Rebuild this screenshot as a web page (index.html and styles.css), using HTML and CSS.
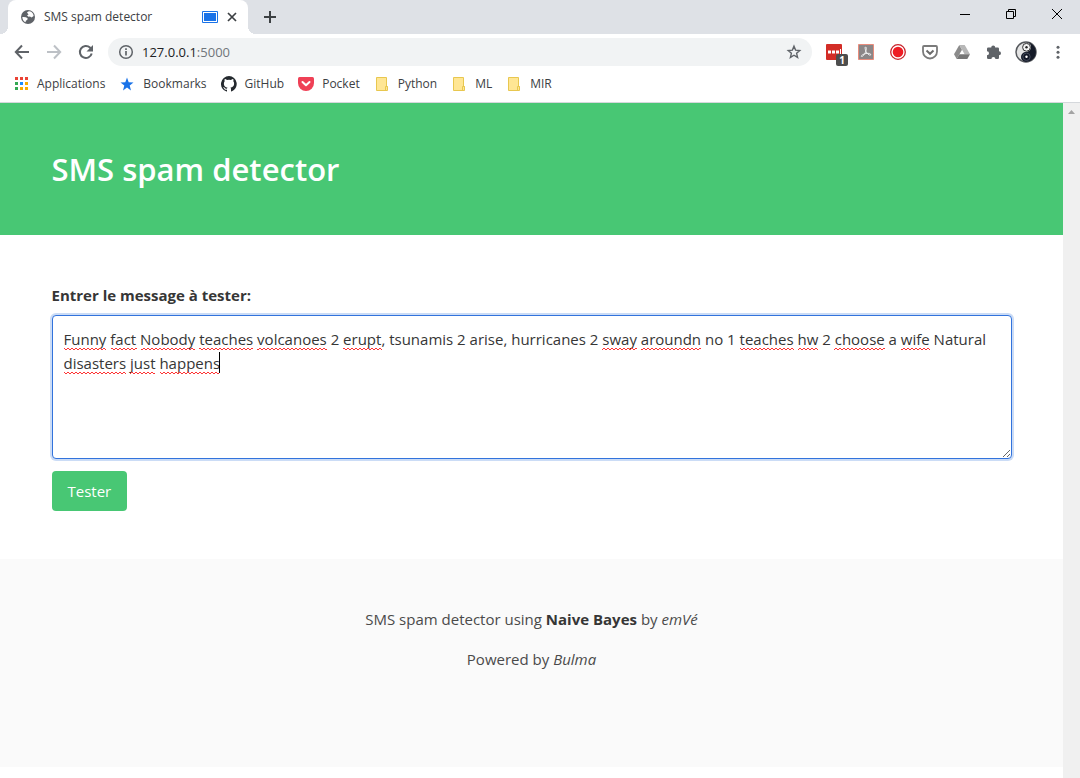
FILE: index.html
```html
<!DOCTYPE html>
<html lang="fr">
<head>
<meta charset="utf-8">
<meta name="viewport" content="width=device-width, initial-scale=1">
<title>SMS spam detector</title>
<link rel="stylesheet" href="styles.css">
</head>
<body>
<header class="browser">
  <div class="tabstrip">
    <div class="tab">
      <svg class="tab-favicon" width="16" height="16" viewBox="0 0 16 16" aria-hidden="true"><circle cx="8" cy="8" r="7" fill="#5f6368"/><path d="M2.300 8q3.500-.3 5 1 1 1-.3 2-1.500.5-1.500 2.300Q2.500 12 2.300 8zM7 3.500q2-2 4.500-.5 2 1.500 2.200 4L11.500 8.500 10 7.500 8.500 7.800 7 6.500 8.500 5.500z" fill="#fff"/></svg>
      <span class="tab-title">SMS spam detector</span>
      <svg width="16" height="14" viewBox="0 0 16 14" aria-hidden="true"><path d="M.5 1.500h15v11H.5z" fill="#fff" stroke="#1a73e8"/><path d="M2 3h12v8H2z" fill="#1a73e8"/></svg>
      <button class="icon-button tab-close" aria-label="Close tab"><svg width="10" height="10" viewBox="0 0 10 10"><path d="M1 1l8 8M9 1L1 9" stroke="#3c4043" stroke-width="1.700"/></svg></button>
    </div>
    <button class="icon-button new-tab" aria-label="New tab"><svg width="12" height="12" viewBox="0 0 12 12"><path d="M6 0v12M0 6h12" stroke="#3c4043" stroke-width="2"/></svg></button>
    <div class="window-controls">
      <button class="icon-button" aria-label="Minimize"><svg width="10" height="10" viewBox="0 0 10 10"><path d="M0 5.500h10" stroke="#000"/></svg></button>
      <button class="icon-button" aria-label="Restore"><svg width="10" height="10" viewBox="0 0 10 10"><path d="M.5 2.500h7v7h-7zM2.500 2.500v-2h7v7h-2" fill="none" stroke="#000"/></svg></button>
      <button class="icon-button" aria-label="Close"><svg width="10" height="10" viewBox="0 0 10 10"><path d="M0 0l10 10M10 0L0 10" stroke="#000"/></svg></button>
    </div>
  </div>
  <div class="toolbar">
    <div class="button-row">
      <button class="icon-button" aria-label="Back"><svg width="16" height="16" viewBox="0 0 16 16"><path d="M15 8H2M8 1.500L1.800 8 8 14.500" fill="none" stroke="#5f6368" stroke-width="2"/></svg></button>
      <button class="icon-button" aria-label="Forward"><svg width="16" height="16" viewBox="0 0 16 16"><path d="M1 8h13M8 1.500L14.200 8 8 14.500" fill="none" stroke="#bdc1c6" stroke-width="2"/></svg></button>
      <button class="icon-button" aria-label="Reload"><svg width="16" height="16" viewBox="0 0 16 16"><path d="M13.700 9.500A6 6 0 1 1 12 3.600l1 1.200" fill="none" stroke="#5f6368" stroke-width="2"/><path d="M15 1v6.500H8.500z" fill="#5f6368"/></svg></button>
    </div>
    <div class="omnibox">
      <svg width="16" height="16" viewBox="0 0 16 16" aria-hidden="true"><circle cx="8" cy="8" r="6.300" fill="none" stroke="#5f6368" stroke-width="1.500"/><path d="M8 7v4.500M8 4.200v1.700" stroke="#5f6368" stroke-width="1.700"/></svg>
      <a class="address" href="#">127.0.0.1<span class="port">:5000</span></a>
      <button class="icon-button star" aria-label="Bookmark this page"><svg width="16" height="16" viewBox="0 0 16 16"><path d="M8 2.200l1.600 3.900 4.200.4-3.200 2.800 1 4.100L8 11.200l-3.600 2.200 1-4.100-3.200-2.800 4.200-.4z" fill="none" stroke="#5f6368" stroke-width="1.400"/></svg></button>
    </div>
    <div class="button-row">
      <button class="icon-button extension" aria-label="Password manager"><svg width="16" height="16" viewBox="0 0 16 16"><rect width="16" height="16" rx="1" fill="#d32d27"/><path d="M2 6.500h3v3H2zM6 6.500h3v3H6zM10 6.500h3v3h-3zM14 5h1v5h-1z" fill="#fff"/></svg><span class="badge">1</span></button>
      <button class="icon-button" aria-label="PDF"><svg width="16" height="16" viewBox="0 0 16 16"><path d="M.5.500h15v15H.5z" fill="#8b8687" stroke="#e98c7c"/><path d="M7.500 3c1.200-.2.900 2.500 0 5S4.500 13 3.500 12.500 5 10 8 9.500s5 0 4.700 1.300S9 10 8 7.500 6.800 3.200 7.500 3z" fill="none" stroke="#eee"/></svg></button>
      <button class="icon-button" aria-label="Record"><svg width="16" height="16" viewBox="0 0 16 16"><circle cx="8" cy="8" r="7.300" fill="#fff" stroke="#c8242c" stroke-width="1.300"/><circle cx="8" cy="8" r="5.300" fill="#ee1c24"/></svg></button>
      <button class="icon-button" aria-label="Save to Pocket"><svg width="16" height="16" viewBox="0 0 16 16"><path d="M2 2h12q1 0 1 1v4.500a7 7 0 0 1-14 0V3q0-1 1-1z" fill="none" stroke="#7b7b7b" stroke-width="1.800"/><path d="M4.500 6.500L8 9.800l3.500-3.300" fill="none" stroke="#6b6b6b" stroke-width="2"/></svg></button>
      <button class="icon-button" aria-label="Drive"><svg width="16" height="16" viewBox="0 0 16 16"><path d="M5.300 1L0 10.200 2.700 15 8 5.800z" fill="#8b8b8b"/><path d="M5.300 1h5.400L16 10.200h-5.400z" fill="#b7b7b7"/><path d="M5.400 10.200H16L13.300 15H2.700z" fill="#777"/></svg></button>
      <button class="icon-button" aria-label="Extensions"><svg width="16" height="16" viewBox="0 0 16 16"><path d="M2.200 3.500h3A2 2 0 0 1 9.200 3.500h2.600q1.200 0 1.200 1.200v2.500a2 2 0 0 1 0 4v2.600q0 1.200-1.200 1.200H9.400a2 2 0 0 0-4 0H2.200q-1.200 0-1.200-1.200v-2.600a2 2 0 0 0 0-4V4.700q0-1.200 1.200-1.200z" fill="#5f6368"/></svg></button>
      <button class="icon-button" aria-label="Profile"><svg width="22" height="22" viewBox="0 0 22 22"><circle cx="11" cy="11" r="10" fill="#e4e4e4" stroke="#55585c" stroke-width="1.500"/><path d="M11 1a10 10 0 0 1 0 20 5 5 0 0 1 0-10 5 5 0 0 0 0-10z" fill="#141a28"/><circle cx="11.500" cy="6.300" r="3.900" fill="#f2f2f2" stroke="#333"/><circle cx="11.500" cy="6.300" r="1.200" fill="#222"/><circle cx="11.500" cy="15.800" r="3.700" fill="#111625" stroke="#444b59"/><circle cx="11.500" cy="15.800" r="1.200" fill="#fff"/></svg></button>
      <button class="icon-button" aria-label="Menu"><svg width="16" height="16" viewBox="0 0 16 16"><g fill="#5f6368"><circle cx="8" cy="3.300" r="1.500"/><circle cx="8" cy="8.300" r="1.500"/><circle cx="8" cy="13.300" r="1.500"/></g></svg></button>
    </div>
  </div>
  <nav class="bookmarks">
    <a href="#"><svg width="16" height="16" viewBox="0 0 16 16"><path d="M2 1h3v3H2zM7 1h3v3H7zM12 1h3v3h-3z" fill="#ea4335"/><path d="M2 6h3v3H2zM2 11h3v3H2z" fill="#34a853"/><path d="M7 6h3v3H7z" fill="#1a8cff"/><path d="M12 6h3v3h-3zM7 11h3v3H7zM12 11h3v3h-3z" fill="#f9ab00"/></svg>Applications</a>
    <a href="#"><svg width="16" height="16" viewBox="0 0 16 16"><path d="M8 1.500l1.700 4.700 4.800.2-3.800 3.100 1.300 4.900L8 11.600l-4 2.800 1.300-4.900-3.800-3.100 4.800-.2z" fill="#1a73e8"/></svg>Bookmarks</a>
    <a href="#"><svg width="16" height="16" viewBox="0 0 16 16"><path d="M8 0a8 8 0 0 0-2.500 15.600c.4.100.5-.2.500-.4v-1.500c-2.200.5-2.700-1-2.700-1-.4-.9-.9-1.200-.9-1.200-.7-.5.100-.5.100-.5.800.1 1.200.8 1.200.8.700 1.300 1.900.9 2.300.7.100-.5.300-.9.500-1.100-1.800-.2-3.600-.9-3.600-4 0-.9.300-1.600.8-2.100-.1-.2-.4-1 .1-2.200 0 0 .7-.2 2.200.8a7.700 7.700 0 0 1 4 0c1.500-1 2.200-.8 2.200-.8.400 1.200.2 2 .1 2.200.5.500.8 1.200.8 2.100 0 3.100-1.900 3.800-3.700 4 .3.200.6.700.6 1.500v2.200c0 .2.100.5.500.4A8 8 0 0 0 8 0z" fill="#24292e"/></svg>GitHub</a>
    <a href="#"><svg width="16" height="16" viewBox="0 0 16 16"><path d="M1.500 1h13Q16 1 16 2.500V7A8 8 0 0 1 0 7V2.500Q0 1 1.500 1z" fill="#ef4056"/><path d="M4.500 6L8 9.300 11.500 6" fill="none" stroke="#fff" stroke-width="2" stroke-linecap="round" stroke-linejoin="round"/></svg>Pocket</a>
    <a href="#"><svg width="16" height="16" viewBox="0 0 16 16"><path d="M2.500 1.500h10v9h1v4h-11z" fill="#ffe694" stroke="#e8c74f"/><path d="M11.500 14v-3.500h2" fill="none" stroke="#e8c74f"/></svg>Python</a>
    <a href="#"><svg width="16" height="16" viewBox="0 0 16 16"><path d="M2.500 1.500h10v9h1v4h-11z" fill="#ffe694" stroke="#e8c74f"/><path d="M11.500 14v-3.500h2" fill="none" stroke="#e8c74f"/></svg>ML</a>
    <a href="#"><svg width="16" height="16" viewBox="0 0 16 16"><path d="M2.500 1.500h10v9h1v4h-11z" fill="#ffe694" stroke="#e8c74f"/><path d="M11.500 14v-3.500h2" fill="none" stroke="#e8c74f"/></svg>MIR</a>
  </nav>
</header>
<div class="viewport">
  <div class="page">
    <section class="hero">
      <div class="container"><h1 class="title">SMS spam detector</h1></div>
    </section>
    <main class="section">
      <form class="container form">
        <label class="label" for="message">Entrer le message à tester:</label>
        <div class="control">
          <textarea class="textarea" id="message" spellcheck="false">Funny fact Nobody teaches volcanoes 2 erupt, tsunamis 2 arise, hurricanes 2 sway aroundn no 1 teaches hw 2 choose a wife Natural disasters just happens</textarea>
          <svg class="spelling" width="936" height="52" viewBox="0 0 936 52" aria-hidden="true">
            <defs><pattern id="wave" y="2" width="4" height="3" patternUnits="userSpaceOnUse"><path d="M-1 -.5L2 2.500l3-3" transform="translate(0 .5)" fill="none" stroke="#f33" stroke-width="1"/></pattern></defs>
            <g fill="url(#wave)">
              <path d="M0 20h42v3H0zM47 20h26v3H47zM77 20h54v3H77zM135 20h54v3h-54zM193 20h70v3h-70zM279 20h39v3h-39zM538 20h35v3h-35zM577 20h60v3h-60zM676 20h54v3h-54zM734 20h20v3h-20zM770 20h51v3h-51zM837 20h29v3h-29z"/>
              <path d="M0 44h62v3H0zM66 44h25v3H66zM96 44h60v3H96z"/>
            </g>
            <path d="M155.500 25v21" stroke="#000"/>
          </svg>
        </div>
        <button class="submit" type="button">Tester</button>
      </form>
    </main>
    <footer class="footer">
      <p>SMS spam detector using <strong>Naive Bayes</strong> by <em>emVé</em></p>
      <p>Powered by <em>Bulma</em></p>
    </footer>
  </div>
  <div class="scrollbar" aria-hidden="true"><svg width="17" height="17" viewBox="0 0 17 17"><path d="M5 11l3.500-4 3.500 4z" fill="#a3a3a3"/></svg></div>
</div>
</body>
</html>
```
FILE: styles.css
```css
* { box-sizing: border-box; }

body {
  margin: 0;
  min-height: 100vh;
  display: flex;
  flex-direction: column;
  background: #fff;
  color: #4a4a4a;
  font-family: "Open Sans", "Noto Sans", sans-serif;
  font-size: 15px;
  line-height: 24px;
}

svg { display: block; flex: none; }
a { color: inherit; text-decoration: none; }

.icon-button {
  display: flex;
  align-items: center;
  justify-content: center;
  flex: none;
  width: 32px;
  height: 28px;
  padding: 0;
  border: 0;
  background: none;
  font: inherit;
}

/* Browser frame */
.browser { border-bottom: 1px solid #d5d8dc; font-size: 12px; }

.tabstrip {
  display: flex;
  height: 34px;
  padding-left: 8px;
  background: #dee1e6;
}

.tab {
  position: relative;
  display: flex;
  align-items: center;
  width: 240px;
  padding: 0 8px 0 12px;
  border-radius: 8px 8px 0 0;
  background: #fff;
  color: #3c4043;
}

.tab::before,
.tab::after {
  content: "";
  position: absolute;
  bottom: 0;
  width: 8px;
  height: 8px;
}

.tab::before { right: 100%; background: radial-gradient(circle at 0 0, #dee1e6 8px, #fff 8px); }
.tab::after { left: 100%; background: radial-gradient(circle at 100% 0, #dee1e6 8px, #fff 8px); }

.tab-title { flex: 1; padding-left: 8px; }
.tab-close { width: 16px; margin-left: 6px; }
.new-tab { margin: 3px 0 0 6px; }
.window-controls { display: flex; margin-left: auto; }
.window-controls .icon-button { width: 46px; }

.toolbar {
  display: flex;
  align-items: center;
  gap: 6px;
  height: 36px;
  padding: 0 6px;
}

.button-row { display: flex; }

.omnibox {
  flex: 1;
  display: flex;
  align-items: center;
  gap: 8px;
  height: 28px;
  padding: 0 2px 0 10px;
  border-radius: 14px;
  background: #f1f3f4;
  font-size: 13px;
}

.address { flex: 1; color: #202124; }
.port { color: #70757a; }

.extension { position: relative; }

.badge {
  position: absolute;
  right: 2px;
  bottom: 0;
  width: 12px;
  height: 12px;
  border-radius: 2px;
  background: #4d4d4d;
  color: #fff;
  font-size: 10px;
  font-weight: 700;
  line-height: 12px;
}

.bookmarks {
  display: flex;
  align-items: center;
  gap: 14px;
  height: 32px;
  padding: 0 13px 4px;
  color: #3c4043;
}

.bookmarks a { display: flex; align-items: center; gap: 8px; }

/* Page */
.viewport { flex: 1; display: flex; }
.page { flex: 1; }
.scrollbar { width: 17px; background: #f0f0f0; }
.container { max-width: 960px; margin: 0 auto; }

.hero { padding: 48px 24px; background: #48c774; }

.title {
  margin: 0;
  color: #fff;
  font-size: 31px;
  font-weight: 600;
  line-height: 36px;
}

.section { padding: 48px 24px; }

.form {
  display: flex;
  flex-direction: column;
  align-items: flex-start;
}

.label { margin-bottom: 8px; color: #363636; font-weight: 700; }
.control { position: relative; width: 100%; margin-bottom: 12px; }

.textarea {
  display: block;
  width: 100%;
  height: 144px;
  padding: 11px;
  border: 1px solid #3273dc;
  border-radius: 4px;
  outline: 0;
  box-shadow: 0 0 0 2px #cbdcf6;
  background: #fff;
  color: #363636;
  font: inherit;
  resize: vertical;
}

.spelling { position: absolute; top: 12px; left: 12px; pointer-events: none; }

.submit {
  height: 40px;
  padding: 0 16px;
  border: 0;
  border-radius: 4px;
  background: #48c774;
  color: #fff;
  font: inherit;
}

.footer {
  display: flex;
  flex-direction: column;
  gap: 16px;
  padding: 48px 24px 96px;
  background: #fafafa;
  text-align: center;
}

.footer p { margin: 0; }
.footer strong { color: #363636; }
```
